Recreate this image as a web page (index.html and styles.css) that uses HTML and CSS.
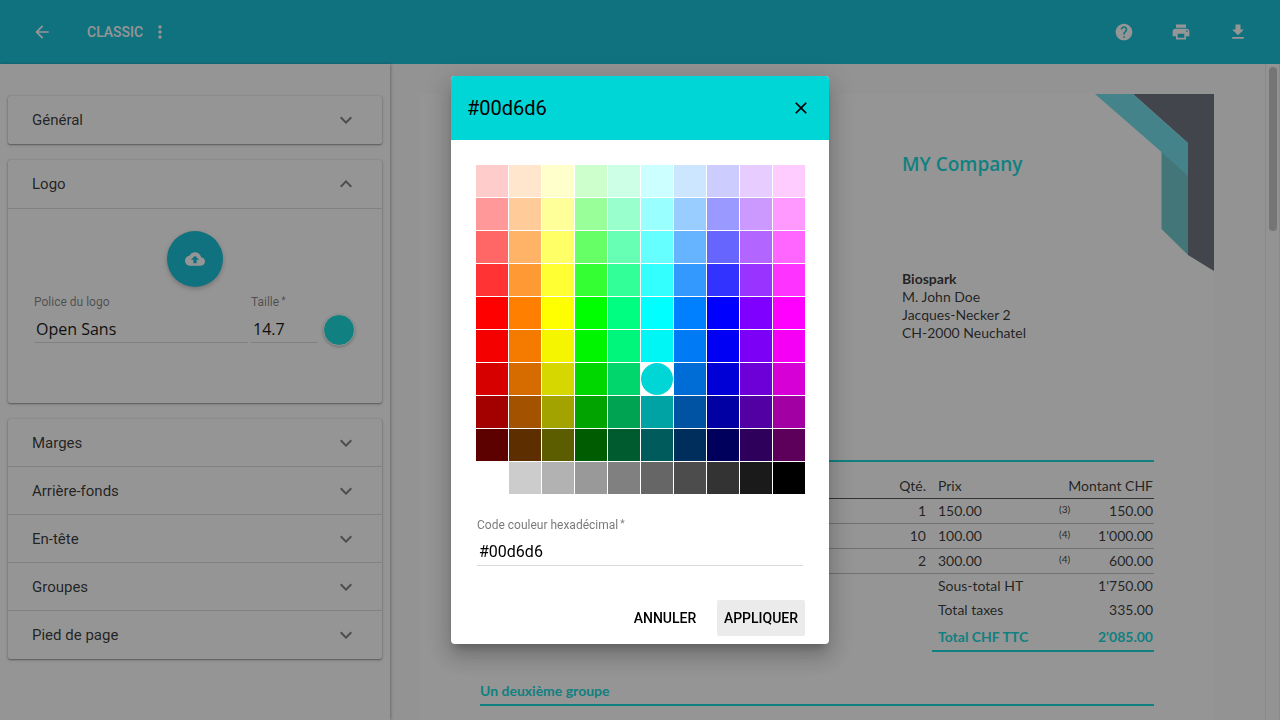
FILE: index.html
```html
<!DOCTYPE html>
<html lang="fr">
<head>
<meta charset="utf-8">
<title>Classic</title>
<link rel="stylesheet" href="styles.css">
</head>
<body>
<svg class="defs" width="0" height="0" aria-hidden="true">
  <symbol id="chevron" viewBox="0 0 24 24"><path d="M16.59 8.59L12 13.17 7.41 8.59 6 10l6 6 6-6z"/></symbol>
</svg>
<div class="app">
  <header class="toolbar">
    <button class="icon-button" aria-label="Retour"><svg viewBox="0 0 24 24"><path d="M20 11H7.83l5.59-5.59L12 4l-8 8 8 8 1.41-1.41L7.83 13H20v-2z"/></svg></button>
    <span class="toolbar-title">CLASSIC</span>
    <button class="icon-button" aria-label="Plus"><svg viewBox="0 0 24 24"><path d="M12 8c1.1 0 2-.9 2-2s-.9-2-2-2-2 .9-2 2 .9 2 2 2zm0 2c-1.1 0-2 .9-2 2s.9 2 2 2 2-.9 2-2-.9-2-2-2zm0 6c-1.1 0-2 .9-2 2s.9 2 2 2 2-.9 2-2-.9-2-2-2z"/></svg></button>
    <div class="toolbar-actions">
      <button class="icon-button" aria-label="Aide"><svg viewBox="0 0 24 24"><path d="M12 2C6.48 2 2 6.48 2 12s4.480 10 10 10 10-4.480 10-10S17.520 2 12 2zm1 17h-2v-2h2v2zm2.070-7.750l-.9.920C13.450 12.900 13 13.500 13 15h-2v-.5c0-1.100.450-2.100 1.170-2.830l1.240-1.260c.370-.360.590-.860.590-1.410 0-1.100-.9-2-2-2s-2 .9-2 2H8c0-2.210 1.790-4 4-4s4 1.790 4 4c0 .880-.360 1.680-.930 2.250z"/></svg></button>
      <button class="icon-button" aria-label="Imprimer"><svg viewBox="0 0 24 24"><path d="M19 8H5c-1.660 0-3 1.340-3 3v6h4v4h12v-4h4v-6c0-1.660-1.340-3-3-3zm-3 11H8v-5h8v5zm3-7c-.550 0-1-.450-1-1s.450-1 1-1 1 .450 1 1-.450 1-1 1zm-1-9H6v4h12V3z"/></svg></button>
      <button class="icon-button" aria-label="Télécharger"><svg viewBox="0 0 24 24"><path d="M19 9h-4V3H9v6H5l7 7 7-7zM5 18v2h14v-2H5z"/></svg></button>
    </div>
  </header>
  <div class="workspace">
    <aside class="sidebar">
      <section class="card">
        <button class="section-head">Général<svg><use href="#chevron"/></svg></button>
      </section>
      <section class="card">
        <button class="section-head" aria-expanded="true">Logo<svg class="flipped"><use href="#chevron"/></svg></button>
        <div class="logo-body">
          <button class="fab" aria-label="Importer un logo"><svg viewBox="0 0 24 24"><path d="M19.350 10.040C18.670 6.590 15.640 4 12 4 9.110 4 6.600 5.640 5.350 8.040 2.340 8.360 0 10.910 0 14c0 3.310 2.690 6 6 6h13c2.760 0 5-2.240 5-5 0-2.640-2.050-4.780-4.650-4.960zM14 13v4h-4v-4H7l5-5 5 5h-3z"/></svg></button>
          <div class="logo-fields">
            <div class="field font-field">
              <label for="logo-font">Police du logo</label>
              <input class="open-sans" id="logo-font" type="text" value="Open Sans">
            </div>
            <div class="field size-field">
              <label for="logo-size">Taille <sup>*</sup></label>
              <input class="open-sans" id="logo-size" type="text" value="14.7">
            </div>
            <button class="color-dot" aria-label="Couleur du logo"></button>
          </div>
        </div>
      </section>
      <section class="card">
        <button class="section-head">Marges<svg><use href="#chevron"/></svg></button>
        <button class="section-head">Arrière-fonds<svg><use href="#chevron"/></svg></button>
        <button class="section-head">En-tête<svg><use href="#chevron"/></svg></button>
        <button class="section-head">Groupes<svg><use href="#chevron"/></svg></button>
        <button class="section-head">Pied de page<svg><use href="#chevron"/></svg></button>
      </section>
    </aside>
    <main class="preview">
      <article class="paper">
        <svg class="corner-art" viewBox="0 0 119 177" aria-hidden="true">
          <path fill="#626676" d="M38 0H119V177L93 161V49z"/>
          <path fill="#62c4c8" d="M66.500 56L93 80V161L66.500 135z"/>
          <path fill="#64dde9" d="M0 0H38L93 49V82L66.500 58z"/>
        </svg>
        <div class="company">MY Company</div>
        <address class="recipient"><strong>Biospark</strong><br>M. John Doe<br>Jacques-Necker 2<br>CH-2000 Neuchatel</address>
        <table class="invoice">
          <colgroup><col><col class="col-price"><col class="col-note"><col class="col-amount"></colgroup>
          <thead>
            <tr><th class="num">Qté.</th><th>Prix</th><th class="num" colspan="2">Montant CHF</th></tr>
          </thead>
          <tbody>
            <tr><td class="num">1</td><td>150.00</td><td class="note">(3)</td><td class="num">150.00</td></tr>
            <tr><td class="num">10</td><td>100.00</td><td class="note">(4)</td><td class="num">1'000.00</td></tr>
            <tr><td class="num">2</td><td>300.00</td><td class="note">(4)</td><td class="num">600.00</td></tr>
          </tbody>
        </table>
        <table class="totals">
          <tbody>
            <tr><td>Sous-total HT</td><td class="num">1'750.00</td></tr>
            <tr><td>Total taxes</td><td class="num">335.00</td></tr>
            <tr class="grand"><td>Total CHF TTC</td><td class="num">2'085.00</td></tr>
          </tbody>
        </table>
        <h2 class="group-title">Un deuxième groupe</h2>
      </article>
    </main>
    <div class="scroll-track"><div class="scroll-thumb"></div></div>
  </div>
</div>
<div class="backdrop">
  <form class="dialog" role="dialog" aria-labelledby="dialog-title">
    <div class="dialog-head">
      <h1 id="dialog-title">#00d6d6</h1>
      <button class="icon-button" type="button" aria-label="Fermer"><svg viewBox="0 0 24 24"><path d="M19 6.410L17.590 5 12 10.590 6.410 5 5 6.410 10.590 12 5 17.590 6.410 19 12 13.410 17.590 19 19 17.590 13.410 12z"/></svg></button>
    </div>
    <div class="dialog-body">
      <div class="palette" id="palette"></div>
      <div class="field hex-field">
        <label for="hex">Code couleur hexadécimal <sup>*</sup></label>
        <input id="hex" type="text" value="#00d6d6">
      </div>
    </div>
    <div class="dialog-actions">
      <button class="text-button" type="button">ANNULER</button>
      <button class="text-button focused" type="button">APPLIQUER</button>
    </div>
  </form>
</div>
<script src="palette.js"></script>
</body>
</html>
```
FILE: styles.css
```css
* { box-sizing: border-box; }
body {
  margin: 0;
  font-family: Roboto, "Liberation Sans", sans-serif;
  color: rgba(0, 0, 0, .87);
}
button, input { font: inherit; color: inherit; border: 0; padding: 0; background: none; }
button { cursor: pointer; }
svg { fill: currentColor; display: block; }
.defs { position: absolute; }

.app { display: flex; flex-direction: column; height: 100vh; overflow: hidden; }

.toolbar {
  flex: none;
  display: flex;
  align-items: center;
  height: 64px;
  padding: 0 32px;
  background: #00bcd4;
  color: #fff;
}
.icon-button { flex: none; width: 20px; height: 20px; }
.icon-button svg { width: 20px; height: 20px; }
.toolbar-title { margin: 0 7px 0 35px; font-size: 14px; font-weight: 500; }
.toolbar-actions { display: flex; gap: 37px; margin-left: auto; }

.workspace { flex: 1; display: flex; min-height: 0; }

.sidebar {
  flex: none;
  width: 390px;
  padding: 32px 8px 0;
  background: #fff;
  box-shadow: 1px 0 3px rgba(0, 0, 0, .3);
  position: relative;
}
.card {
  margin-bottom: 16px;
  background: #fff;
  border-radius: 2px;
  box-shadow: 0 1px 3px rgba(0, 0, 0, .3), 0 1px 1px rgba(0, 0, 0, .2), 0 0 1px rgba(0, 0, 0, .3);
}
.section-head {
  display: flex;
  align-items: center;
  justify-content: space-between;
  width: 100%;
  height: 48px;
  padding: 0 24px;
  font-size: 15px;
  text-align: left;
}
.section-head:has(+ .section-head) { box-shadow: inset 0 -1px rgba(0, 0, 0, .15); }
.section-head svg { width: 24px; height: 24px; color: rgba(0, 0, 0, .54); }
.section-head .flipped { transform: rotate(180deg); }

.logo-body { padding: 22px 26px 57px; border-top: 1px solid rgba(0, 0, 0, .15); }
.fab {
  display: flex;
  align-items: center;
  justify-content: center;
  width: 56px;
  height: 56px;
  margin: 0 auto 8px;
  border-radius: 50%;
  background: #00bcd4;
  color: #fff;
  box-shadow: 0 2px 5px rgba(0, 0, 0, .26);
}
.fab svg { width: 20px; height: 20px; }

.field { display: flex; flex-direction: column; }
.field label { font-size: 12px; line-height: 14px; color: rgba(0, 0, 0, .54); }
.field sup { font-size: 10px; line-height: 0; vertical-align: 2px; margin-left: -1px; }
.field input {
  width: 100%;
  height: 34px;
  padding: 6px 2px 0;
  font-size: 16px;
  border-bottom: 1px solid rgba(0, 0, 0, .15);
  outline: 0;
  color: #000;
}
.logo-fields { display: flex; align-items: flex-start; }
.font-field { flex: 1; margin-right: 3px; }
.size-field { width: 67px; margin-right: 5px; }
.field .open-sans { font-family: "Open Sans", sans-serif; }
.color-dot {
  width: 32px;
  height: 32px;
  margin: 19px 1px 0 0;
  border: 1px solid #fff;
  border-radius: 50%;
  background: #00d6d6;
  box-shadow: 0 1px 3px rgba(0, 0, 0, .3);
}

.preview { flex: 1; min-width: 0; padding: 30px 51px 0 30px; background: #fcfcfc; }
.paper {
  position: relative;
  min-height: 100%;
  padding: 54px 60px 0;
  background: #fff;
  font-family: Lato, sans-serif;
  font-size: 14px;
  line-height: 18px;
}
.corner-art { position: absolute; top: 0; right: 0; width: 119px; height: 177px; }
.company {
  width: 252px;
  margin-left: auto;
  font: 600 19px/32px "Open Sans", sans-serif;
  color: #00d6d6;
}
.recipient {
  width: 252px;
  height: 190px;
  margin: 90px 0 0 auto;
  font-style: normal;
}
.invoice, .totals { border-collapse: collapse; table-layout: fixed; }
.invoice { width: 100%; border-top: 2px solid #00d6d6; }
.invoice th { height: 37px; padding: 12px 0 0; font-weight: 400; text-align: left; }
.invoice thead tr { border-bottom: 1px solid #444; }
.invoice td { height: 25px; padding: 0; }
.invoice tbody tr { border-bottom: 1px solid #bbb; }
.invoice th:first-child, .invoice td:first-child { padding-right: 12px; }
.col-price { width: 116px; }
.col-note { width: 30px; }
.col-amount { width: 70px; }
.invoice .num, .totals .num { text-align: right; }
.invoice .num:last-child, .totals .num { padding-right: 1px; }
.invoice .note { font-size: 10px; padding: 0 0 4px 5px; }
.totals { width: 222px; margin-left: auto; }
.totals td { height: 24px; padding: 0; }
.totals td:first-child { padding-left: 6px; }
.totals .grand { font-weight: 700; color: #00d6d6; border-bottom: 2px solid #00d6d6; }
.totals .grand td { height: 29px; padding-top: 2px; }
.group-title {
  margin: 30px 0 0;
  padding-bottom: 4px;
  border-bottom: 2px solid #00d6d6;
  font-size: 14px;
  line-height: 18px;
  color: #00d6d6;
}

.scroll-track { flex: none; width: 15px; padding: 3px; background: #fcfcfc; border: 1px solid #e8e8e8; border-width: 0 1px; }
.scroll-thumb { height: 164px; width: 8px; border-radius: 4px; background: #c1c1c1; }

.backdrop {
  position: fixed;
  inset: 0;
  display: flex;
  align-items: center;
  justify-content: center;
  background: rgba(33, 33, 33, .48);
}
.dialog {
  width: 378px;
  border-radius: 4px;
  overflow: hidden;
  background: #fff;
  box-shadow: 0 7px 8px -4px rgba(0, 0, 0, .2), 0 13px 19px 2px rgba(0, 0, 0, .14), 0 5px 24px 4px rgba(0, 0, 0, .12);
}
.dialog-head {
  display: flex;
  align-items: center;
  justify-content: space-between;
  height: 64px;
  padding: 0 18px 0 16px;
  background: #00d6d6;
  color: #000;
}
.dialog-head h1 { margin: 0; font-size: 20px; font-weight: 400; }
.dialog-body { padding: 25px 24px 34px 25px; }
.palette { display: grid; grid-template-columns: repeat(10, 1fr); gap: 1px; }
.swatch { height: 32px; }
.swatch.selected { border-radius: 50%; }
.hex-field { margin: 24px 2px 0 1px; }
.dialog-actions { display: flex; justify-content: flex-end; gap: 8px; padding: 0 24px 8px; }
.text-button { min-width: 88px; height: 36px; padding: 0 6px; font-size: 14px; font-weight: 500; color: #000; border-radius: 2px; }
.text-button.focused { background: #ebebeb; }
```
FILE: palette.js
```js
// Ten hues by nine tones, followed by a row of greys.
const hues = [
  [255, 0, 0], [255, 128, 0], [255, 255, 0], [0, 255, 0], [0, 255, 128],
  [0, 255, 255], [0, 128, 255], [0, 0, 255], [128, 0, 255], [255, 0, 255]
];
const tints = [0.8, 0.6, 0.4, 0.2, 0];
const shades = [0.96, 0.84, 0.64, 0.36];
const greys = [255, 204, 178, 153, 128, 102, 76, 51, 26, 0];

const toHex = rgb => '#' + rgb.map(v => Math.round(v).toString(16).padStart(2, '0')).join('');
const colors = [
  ...tints.flatMap(t => hues.map(h => toHex(h.map(v => v + (255 - v) * t)))),
  ...shades.flatMap(s => hues.map(h => toHex(h.map(v => v * s)))),
  ...greys.map(g => toHex([g, g, g]))
];

const palette = document.getElementById('palette');
colors.forEach(color => {
  const swatch = document.createElement('button');
  swatch.type = 'button';
  swatch.className = color === '#00d6d6' ? 'swatch selected' : 'swatch';
  swatch.style.background = color;
  swatch.setAttribute('aria-label', color);
  palette.append(swatch);
});
```
